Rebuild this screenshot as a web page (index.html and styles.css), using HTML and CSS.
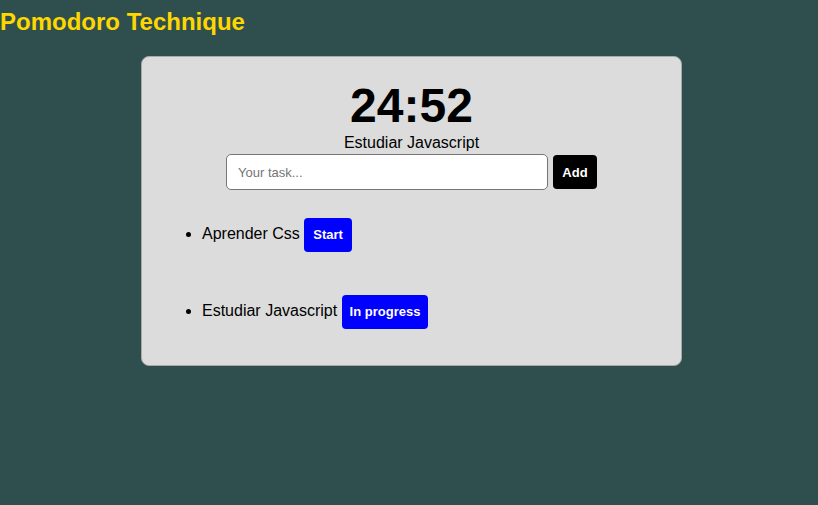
FILE: index.html
```html
<!DOCTYPE html>
<html>
<head>
<meta charset="utf-8">
<link rel="stylesheet" href="styles.css">
</head>
<body>
<h1 class="title">Pomodoro Technique</h1>
<main class="card">
  <div class="timer">24:52</div>
  <div class="current">Estudiar Javascript</div>
  <form class="add-row">
    <input class="task-input" type="text" placeholder="Your task...">
    <button class="btn btn-add" type="button">Add</button>
  </form>
  <ul class="tasks">
    <li class="task">Aprender Css <button class="btn btn-blue" type="button">Start</button></li>
    <li class="task">Estudiar Javascript <button class="btn btn-blue btn-wide" type="button">In progress</button></li>
  </ul>
</main>
</body>
</html>
```

FILE: styles.css
```css
html, body {
  margin: 0;
  padding: 0;
  background: #2f4f4f;
  font-family: "Liberation Sans", Arial, sans-serif;
}
.title {
  margin: 0;
  padding-top: 8px;
  font-size: 24px;
  line-height: 28px;
  color: #ffd700;
  font-weight: bold;
}
.card {
  box-sizing: border-box;
  width: 541px;
  margin: 20px 0 0 141px;
  padding: 21px 20px 20px 20px;
  background: #dcdcdc;
  border: 1px solid #a9a9a9;
  border-radius: 8px;
  display: flex;
  flex-direction: column;
}
.timer {
  text-align: center;
  font-size: 48px;
  font-weight: bold;
  line-height: 56px;
  color: #000;
}
.current {
  text-align: center;
  font-size: 16px;
  line-height: 18px;
  color: #000;
}
.add-row {
  display: flex;
  justify-content: center;
  align-items: center;
  gap: 5px;
  margin: 2px 0 0 0;
}
.task-input {
  box-sizing: border-box;
  width: 322px;
  height: 36px;
  padding: 0 11px;
  border: 1px solid #767676;
  border-radius: 5px;
  font-family: "Liberation Sans", Arial, sans-serif;
  font-size: 13px;
  background: #fff;
}
.task-input::placeholder {
  color: #757575;
}
.btn {
  box-sizing: border-box;
  height: 34px;
  padding: 0 9px;
  border: none;
  border-radius: 4px;
  color: #fff;
  font-family: "Liberation Sans", Arial, sans-serif;
  font-size: 13px;
  font-weight: bold;
  vertical-align: middle;
}
.btn-add {
  background: #000;
  width: 44px;
  padding: 0;
}
.btn-blue {
  background: #0000ff;
}
.btn-wide {
  padding: 0 8px;
}
.tasks {
  margin: 27px 0 16px 0;
  padding-left: 40px;
}
.task {
  font-size: 16px;
  line-height: 34px;
  color: #000;
}
.task + .task {
  margin-top: 42px;
}
```
